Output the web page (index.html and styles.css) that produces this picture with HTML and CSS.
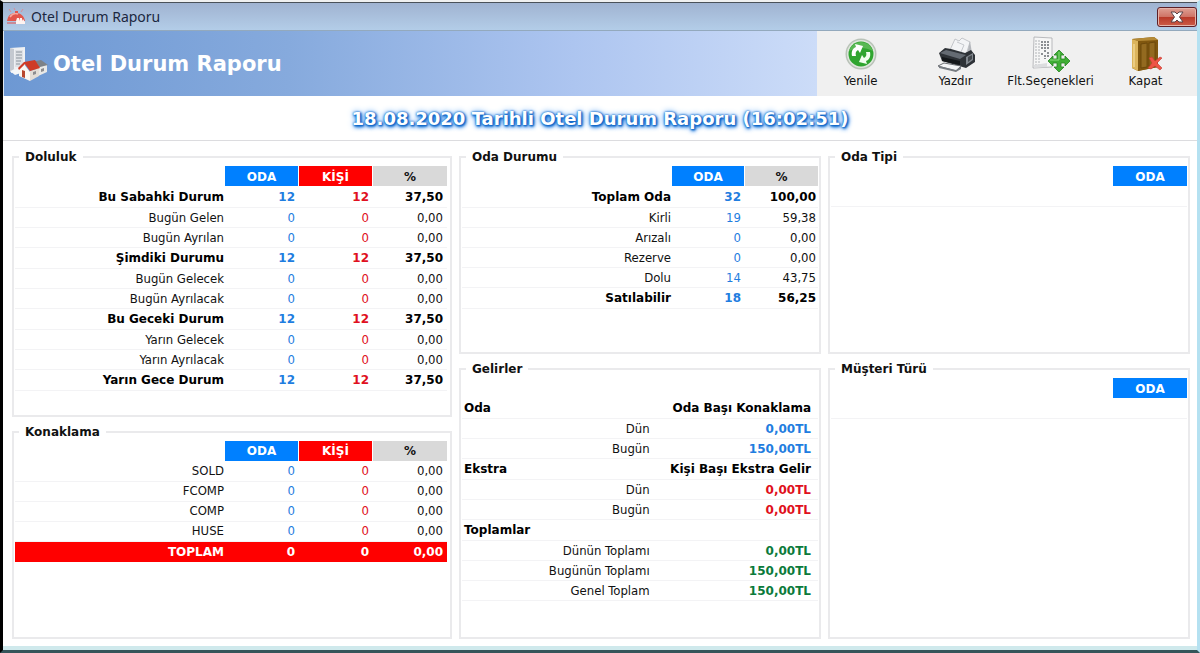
FILE: index.html
```html
<!DOCTYPE html>
<html lang="tr">
<head>
<meta charset="utf-8">
<title>Otel Durum Raporu</title>
<link rel="stylesheet" href="styles.css">
</head>
<body>
<div class="window">
  <header class="titlebar">
    <svg class="titlebar-icon" viewBox="0 0 20 18" aria-hidden="true">
      <path d="M1 13c1-6 4-8 9-8 5 0 8 3 9 8z" fill="#e2564c"/>
      <path d="M4 9c2-3 5-4 8-3" stroke="#f6aaa0" stroke-width="1.5" fill="none"/>
      <path d="M1 14h18v2H1z" fill="#c98a97"/>
      <path d="M10 13l1-3h2v3l1-3h2v3l1-2 2 3v2h-9z" fill="#fff3f0"/>
      <path d="M9 3h3v2H9z" fill="#e2564c"/>
      <path d="M3 1l2 3M17 1l-2 3M8 0l1 2" stroke="#d98c96" stroke-width="1"/>
    </svg>
    <span class="titlebar-text">Otel Durum Raporu</span>
    <button class="close" type="button" aria-label="Pencereyi kapat">
      <svg viewBox="0 0 14 12" aria-hidden="true">
        <path d="M1 1h4l2 2 2-2h4L9.500 6l3.500 5H9L7 9l-2 2H1l3.500-5z" fill="#fff" stroke="#5d4448" stroke-width="1"/>
      </svg>
    </button>
  </header>

  <div class="ribbon">
    <div class="brand">
      <svg class="brand-icon" viewBox="0 0 40 36" aria-hidden="true">
        <path d="M1 2l15-1v23L2 27z" fill="#eef0f2"/>
        <path d="M1 2l4 1v20l-4 3z" fill="#c4c9d0"/>
        <path d="M6 4h8v17H6z" fill="#dfe2e6"/>
        <path d="M7 6h6M7 9h6M7 12h6M7 15h5M7 18h4" stroke="#8b939c" stroke-width="1.2"/>
        <path d="M1 25l8-2 6 3-9 3z" fill="#f6f7f8"/>
        <path d="M27 20l11-2v8l-11 5z" fill="#e9e9e7"/>
        <path d="M23 16l9-2 7 5-12 3z" fill="#7d8288"/>
        <path d="M10 22l5-4 6 8v9l-11-5z" fill="#fbf7f2"/>
        <path d="M21 25l9-3v8l-9 5z" fill="#e4ddd6"/>
        <path d="M9 22l6-6 11-2 5 8-10 3-5-7-6 6z" fill="#cf3b27"/>
        <path d="M13 24l3 1v7l-3-1z" fill="#b8472f"/>
        <path d="M24 26l3-1v3l-3 1zM32 23l3-1v3l-3 1z" fill="#8d8d90"/>
      </svg>
      <h1>Otel Durum Raporu</h1>
    </div>
    <nav class="tools">
      <button type="button" class="tool">
        <svg viewBox="0 0 36 36" aria-hidden="true">
          <circle cx="18" cy="18" r="15.500" fill="#b9c2b8"/>
          <circle cx="18" cy="18" r="14" fill="#dfe6dd"/>
          <circle cx="18" cy="18" r="12.500" fill="#2fa52f"/>
          <path d="M6 15a12.500 12.500 0 0 1 24 0c-8-4-16-4-24 0z" fill="#58b853"/>
          <path d="M9 20c-1-5 1-8 4-9l-1-3 8 2-3 7-2-3c-2 1-3 3-2 6z" fill="#fff"/>
          <path d="M27 16c1 5-1 8-4 9l1 3-8-2 3-7 2 3c2-1 3-3 2-6z" fill="#f2fff0"/>
        </svg>
        <span>Yenile</span>
      </button>
      <button type="button" class="tool">
        <svg viewBox="0 0 38 36" aria-hidden="true">
          <path d="M13 14l5-11 4 2 3-3 8 4-4 13z" fill="#f3f4f6" stroke="#b6b9be" stroke-width=".8"/>
          <path d="M20 6l7 3-3 7" stroke="#c5c8cd" fill="none"/>
          <path d="M33 5l2 12-5 1z" fill="#b4b7bc"/>
          <path d="M2 17l6-5 6 1 14 4 6-3 4 5v7l-9 6-24-7z" fill="#2e3237"/>
          <path d="M3 17l6-3 20 5-6 4z" fill="#656b73"/>
          <path d="M5 21l18 4v4L5 25z" fill="#14171a"/>
          <path d="M29 21l7-4v7l-7 5z" fill="#81878e"/>
          <path d="M31 21l4-2v4l-4 3z" fill="#44494e"/>
          <path d="M7 27l17 3-5 5-18-5z" fill="#f4f5f7" stroke="#5a5e63" stroke-width=".9"/>
          <path d="M2 30l17 4 5-4v3l-5 3-17-4z" fill="#777c82"/>
        </svg>
        <span>Yazdır</span>
      </button>
      <button type="button" class="tool">
        <svg class="wide" viewBox="0 0 40 36" aria-hidden="true">
          <path d="M3 1l18 1v29L2 32z" fill="#f6f6f6" stroke="#a9abae" stroke-width=".8"/>
          <path d="M5 4v25M8 4v25" stroke="#bcbec1" stroke-width="1.200" stroke-dasharray="2 1"/>
          <path d="M11 5v9M14 5v12M17 5v8M11 17v3M14 19v4M17 16v6" stroke="#8b8e92" stroke-width="2" stroke-dasharray="2 1"/>
          <path d="M3 29l13-2v4L3 32z" fill="#dcdddf"/>
          <path d="M28 14l5 5h-3v4h4v-3l5 5-5 5v-3h-4v4h3l-5 5-5-5h3v-4h-4v3l-5-5 5-5v3h4v-4h-3z" fill="#3fae35" stroke="#268322" stroke-width=".8"/>
          <path d="M28 16v8h-9" stroke="#8bda7e" fill="none"/>
        </svg>
        <span>Flt.Seçenekleri</span>
      </button>
      <button type="button" class="tool">
        <svg viewBox="0 0 34 36" aria-hidden="true">
          <path d="M3 3l22-2 4 3v27l-20 4-6-3z" fill="#8a6118"/>
          <path d="M3 3l6 2v30l-6-3z" fill="#dcb45c"/>
          <path d="M9 5l20-1v27L9 35z" fill="#80570f"/>
          <path d="M3 3l22-2 4 3-20 1z" fill="#b58a36"/>
          <path d="M12 8l6-1v24l-6 1zM20 7l6-1v23l-6 1z" fill="#936a20" stroke="#664409" stroke-width=".8"/>
          <path d="M5 8v23" stroke="#f2d68f" stroke-width="1.500"/>
          <path d="M20 22l3-1 3 4 5-4 2 1-5 5 5 5-2 2-5-4-4 3-3-1 4-5z" fill="#ee5447" stroke="#c53a30" stroke-width=".6"/>
        </svg>
        <span>Kapat</span>
      </button>
    </nav>
  </div>

  <h2 class="banner">18.08.2020 Tarihli Otel Durum Raporu (16:02:51)</h2>

  <main class="board">
    <div class="column">
      <fieldset class="group occupancy">
        <legend>Doluluk</legend>
        <table class="grid">
          <thead><tr><td></td><th class="h-room">ODA</th><th class="h-person">KİŞİ</th><th class="h-rate">%</th></tr></thead>
          <tbody>
            <tr class="strong"><th>Bu Sabahki Durum</th><td class="room">12</td><td class="person">12</td><td>37,50</td></tr>
            <tr><th>Bugün Gelen</th><td class="room">0</td><td class="person">0</td><td>0,00</td></tr>
            <tr><th>Bugün Ayrılan</th><td class="room">0</td><td class="person">0</td><td>0,00</td></tr>
            <tr class="strong"><th>Şimdiki Durumu</th><td class="room">12</td><td class="person">12</td><td>37,50</td></tr>
            <tr><th>Bugün Gelecek</th><td class="room">0</td><td class="person">0</td><td>0,00</td></tr>
            <tr><th>Bugün Ayrılacak</th><td class="room">0</td><td class="person">0</td><td>0,00</td></tr>
            <tr class="strong"><th>Bu Geceki Durum</th><td class="room">12</td><td class="person">12</td><td>37,50</td></tr>
            <tr><th>Yarın Gelecek</th><td class="room">0</td><td class="person">0</td><td>0,00</td></tr>
            <tr><th>Yarın Ayrılacak</th><td class="room">0</td><td class="person">0</td><td>0,00</td></tr>
            <tr class="strong"><th>Yarın Gece Durum</th><td class="room">12</td><td class="person">12</td><td>37,50</td></tr>
          </tbody>
        </table>
      </fieldset>
      <fieldset class="group lodging">
        <legend>Konaklama</legend>
        <table class="grid">
          <thead><tr><td></td><th class="h-room">ODA</th><th class="h-person">KİŞİ</th><th class="h-rate">%</th></tr></thead>
          <tbody>
            <tr><th>SOLD</th><td class="room">0</td><td class="person">0</td><td>0,00</td></tr>
            <tr><th>FCOMP</th><td class="room">0</td><td class="person">0</td><td>0,00</td></tr>
            <tr><th>COMP</th><td class="room">0</td><td class="person">0</td><td>0,00</td></tr>
            <tr><th>HUSE</th><td class="room">0</td><td class="person">0</td><td>0,00</td></tr>
          </tbody>
          <tfoot><tr><th>TOPLAM</th><td>0</td><td>0</td><td>0,00</td></tr></tfoot>
        </table>
      </fieldset>
    </div>

    <div class="column middle">
      <fieldset class="group upper">
        <legend>Oda Durumu</legend>
        <table class="grid">
          <thead><tr><td></td><th class="h-room">ODA</th><th class="h-rate">%</th></tr></thead>
          <tbody>
            <tr class="strong"><th>Toplam Oda</th><td class="room">32</td><td>100,00</td></tr>
            <tr><th>Kirli</th><td class="room">19</td><td>59,38</td></tr>
            <tr><th>Arızalı</th><td class="room">0</td><td>0,00</td></tr>
            <tr><th>Rezerve</th><td class="room">0</td><td>0,00</td></tr>
            <tr><th>Dolu</th><td class="room">14</td><td>43,75</td></tr>
            <tr class="strong"><th>Satılabilir</th><td class="room">18</td><td>56,25</td></tr>
          </tbody>
        </table>
      </fieldset>
      <fieldset class="group lower">
        <legend>Gelirler</legend>
        <table class="grid income">
          <tbody>
            <tr class="strong"><th class="section">Oda</th><td>Oda Başı Konaklama</td></tr>
            <tr><th>Dün</th><td class="amount room">0,00TL</td></tr>
            <tr><th>Bugün</th><td class="amount room">150,00TL</td></tr>
            <tr class="strong"><th class="section">Ekstra</th><td>Kişi Başı Ekstra Gelir</td></tr>
            <tr><th>Dün</th><td class="amount person">0,00TL</td></tr>
            <tr><th>Bugün</th><td class="amount person">0,00TL</td></tr>
            <tr class="strong"><th class="section">Toplamlar</th><td></td></tr>
            <tr><th>Dünün Toplamı</th><td class="amount total">0,00TL</td></tr>
            <tr><th>Bugünün Toplamı</th><td class="amount total">150,00TL</td></tr>
            <tr><th>Genel Toplam</th><td class="amount total">150,00TL</td></tr>
          </tbody>
        </table>
      </fieldset>
    </div>

    <div class="column">
      <fieldset class="group upper">
        <legend>Oda Tipi</legend>
        <table class="grid">
          <thead><tr><td></td><th class="h-room">ODA</th></tr></thead>
          <tbody><tr><th></th><td></td></tr></tbody>
        </table>
      </fieldset>
      <fieldset class="group lower">
        <legend>Müşteri Türü</legend>
        <table class="grid">
          <thead><tr><td></td><th class="h-room">ODA</th></tr></thead>
          <tbody><tr><th></th><td></td></tr></tbody>
        </table>
      </fieldset>
    </div>
  </main>
</div>
</body>
</html>
```
FILE: styles.css
```css
* {
  box-sizing: border-box;
}

body {
  margin: 0;
  background: #e9eef2;
  color: #111;
  font-family: "DejaVu Sans Condensed", "Noto Sans", sans-serif;
  font-size: 13px;
  line-height: 16px;
}

button {
  font: inherit;
  color: inherit;
  cursor: pointer;
}

.window {
  display: flex;
  flex-direction: column;
  min-height: 100vh;
  background: #fff;
  border-left: 3px solid #000;
  border-right: 3px solid #b5e1f1;
  border-bottom: 3px solid #35555a;
  border-top: 2px solid #f0f0f0;
}

/* Title bar */
.titlebar {
  display: flex;
  align-items: center;
  gap: 5px;
  height: 29px;
  padding: 0 0 0 3px;
  border-top: 1px solid #4a5159;
  border-bottom: 1px solid #93a9bd;
  background: linear-gradient(#a0b3d1, #b3cde8);
}

.titlebar-icon {
  width: 20px;
  height: 18px;
}

.titlebar-text {
  flex: 1;
  color: #1b2740;
  font-family: "Noto Sans", sans-serif;
  font-size: 14px;
}

.close {
  display: grid;
  place-items: center;
  width: 40px;
  height: 20px;
  padding: 0;
  border: 1px solid #5e2027;
  border-radius: 3px;
  background: linear-gradient(#dfa094 0%, #cf7466 48%, #b93a29 52%, #cc5c48 100%);
  box-shadow: inset 0 0 0 1px #e6b4aa;
}

.close svg {
  width: 14px;
  height: 12px;
}

/* Ribbon */
.ribbon {
  display: flex;
  height: 65px;
  background: #f0f0f0;
  border-left: 1px solid #dfe6ee;
}

.brand {
  flex: 1;
  display: flex;
  align-items: center;
  gap: 4px;
  padding-left: 5px;
  background: linear-gradient(90deg, #6d98d3 0%, #86aadd 35%, #adc5f0 70%, #ccdcf8 100%);
}

.brand-icon {
  width: 40px;
  height: 36px;
}

.brand h1 {
  margin: 0;
  color: #fff;
  font-family: "DejaVu Sans", sans-serif;
  font-size: 21px;
  line-height: 28px;
}

.tools {
  display: grid;
  grid-template-columns: repeat(4, 95px);
  width: 380px;
  padding-right: 4px;
  justify-content: end;
}

.tool {
  display: flex;
  flex-direction: column;
  align-items: center;
  gap: 1px;
  padding: 5px 0 0;
  border: 0;
  background: none;
  white-space: nowrap;
}

.tool svg {
  width: 38px;
  height: 36px;
}

.tool .wide {
  width: 40px;
}

/* Report heading */
.banner {
  margin: 0;
  padding: 11px 0 9px;
  border-bottom: 1px solid #dcdcdf;
  color: #fff;
  font-family: "DejaVu Sans", sans-serif;
  font-size: 18px;
  line-height: 24px;
  text-align: center;
  text-shadow: 0 0 2px #0f66c8, 1px 1px 2px #0f66c8, 1px 1px 3px #0f66c8, 1px 2px 4px #1f7fe4, 0 0 6px #3f95ee;
}

/* Report groups */
.board {
  flex: 1;
  display: grid;
  grid-template-columns: 440fr 362fr 362fr;
  gap: 7px;
  padding: 8px 7px 7px 9px;
  border-bottom: 4px solid #cfe9ec;
}

.column {
  display: flex;
  flex-direction: column;
  gap: 7px;
}

.group {
  min-width: 0;
  margin: 0;
  padding: 1px 1px 0;
  border: 2px solid #eaeaec;
}

.group legend {
  margin-left: 4px;
  padding: 0 6px;
  font-family: "DejaVu Sans", sans-serif;
  font-size: 12px;
  font-weight: bold;
}

.occupancy {
  flex: 269 1 0;
  padding-right: 3px;
}

.lodging {
  flex: 215 1 0;
  padding-right: 3px;
}

.upper {
  flex: 205 1 0;
}

.lower {
  flex: 279 1 0;
}

.grid {
  width: 100%;
  border-collapse: separate;
  border-spacing: 0;
  table-layout: fixed;
}

.grid th,
.grid td {
  height: 20px;
  padding: 0 4px 0 0;
  border-bottom: 1px solid #f3f3f5;
  font-weight: normal;
  text-align: right;
  line-height: 16px;
}

.grid .strong th,
.grid .strong td {
  height: 21px;
  color: #000;
  font-family: "DejaVu Sans", sans-serif;
  font-size: 12px;
  font-weight: bold;
}

.grid tbody th {
  padding-right: 1px;
}

.grid thead th {
  width: 74px;
  height: 21px;
  padding: 1px 0 0;
  border-bottom: 1px solid #fff;
  border-right: 1px solid #fff;
  font-family: "DejaVu Sans", sans-serif;
  font-size: 12px;
  font-weight: bold;
  text-align: center;
}

.middle .grid thead th {
  width: 73px;
}

.middle .grid td:last-child {
  padding-right: 2px;
}

.grid thead td {
  border-bottom: 0;
}

.grid thead th:last-child {
  border-right: 0;
}

.grid thead .h-room {
  background: #0080ff;
  color: #fff;
}

.grid thead .h-person {
  background: #f00;
  color: #fff;
}

.grid thead .h-rate {
  background: #d9d9d9;
}

.grid .strong .room,
.grid tbody .room {
  color: #1f7de0;
}

.grid .strong .person,
.grid tbody .person {
  color: #e01020;
}

.grid tbody .total {
  color: #0b7a3b;
}

.grid tfoot th,
.grid tfoot td {
  border-bottom: 0;
  background: #f00;
  color: #fff;
  font-family: "DejaVu Sans", sans-serif;
  font-size: 12px;
  font-weight: bold;
}

.grid tfoot th {
  padding-right: 1px;
}

.income {
  margin-top: 20px;
}

.grid .amount {
  font-family: "DejaVu Sans", sans-serif;
  font-size: 12px;
  font-weight: bold;
}

.grid.income th {
  width: 53%;
}

.middle .grid.income td:last-child {
  padding-right: 7px;
}

.grid.income .section {
  padding-left: 2px;
  text-align: left;
}
```
